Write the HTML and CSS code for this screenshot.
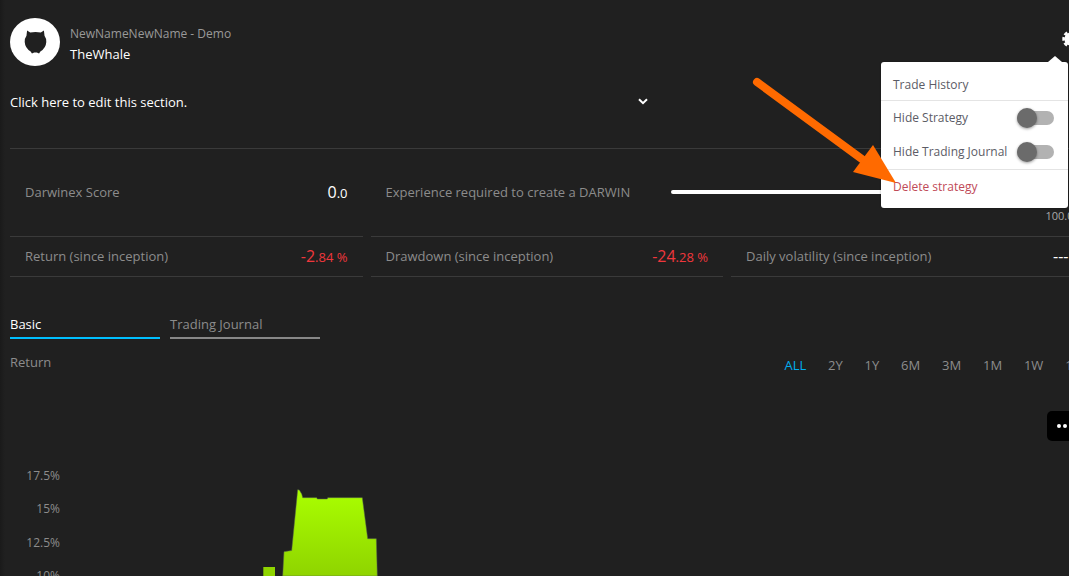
FILE: index.html

```html
<!DOCTYPE html>
<html lang="en">
<head>
    <meta charset="UTF-8">
    <title>TheWhale - Strategy</title>
    <link rel="stylesheet" href="styles.css">
</head>
<body>
    <div class="page">
        <header class="header">
            <div class="avatar">
                <svg width="23" height="26" viewBox="0 0 26 28">
                    <path fill="#202020" d="M3.5 1 L7 3.4 Q13 2.2 19 3.4 L22.5 1 L23.2 7 Q25.4 10 25.2 14 Q24.8 21 18.5 24.6 L17 27 L14.5 26 L11.5 26 L9 27 L7.5 24.6 Q1.2 21 0.8 14 Q0.6 10 2.8 7 Z"/>
                </svg>
            </div>
            <div class="owner">
                <div class="owner-account">NewNameNewName - Demo</div>
                <div class="owner-name">TheWhale</div>
            </div>
            <svg class="gear" width="18" height="18" viewBox="0 0 18 18">
                <circle cx="9" cy="9" r="6.6" fill="#fff"/>
                <circle cx="9" cy="9" r="7.4" fill="none" stroke="#fff" stroke-width="2.6" stroke-dasharray="3.6 2.2" stroke-dashoffset="1.8"/>
            </svg>
        </header>

        <div class="about">
            <span class="about-text">Click here to edit this section.</span>
            <svg class="chevron" width="10" height="7" viewBox="0 0 10 7">
                <polyline points="1,1.2 5,5.2 9,1.2" fill="none" stroke="#fff" stroke-width="2"/>
            </svg>
        </div>

        <div class="stats">
            <div class="stat stat-tall">
                <span class="stat-label">Darwinex Score</span>
                <span class="stat-value"><b>0</b><small>.0</small></span>
            </div>
            <div class="stat stat-tall stat-wide">
                <span class="stat-label">Experience required to create a DARWIN</span>
                <div class="progress">
                    <div class="progress-bar"></div>
                    <div class="progress-max">100.0</div>
                </div>
            </div>
            <div class="stat">
                <span class="stat-label">Return (since inception)</span>
                <span class="stat-value negative"><b>-2</b><small>.84 %</small></span>
            </div>
            <div class="stat">
                <span class="stat-label">Drawdown (since inception)</span>
                <span class="stat-value negative"><b>-24</b><small>.28 %</small></span>
            </div>
            <div class="stat">
                <span class="stat-label">Daily volatility (since inception)</span>
                <span class="stat-value"><b>---</b></span>
            </div>
        </div>

        <div class="tabs">
            <div class="tab active">Basic</div>
            <div class="tab">Trading Journal</div>
        </div>

        <div class="chart-head">
            <span class="chart-title">Return</span>
            <div class="ranges">
                <span class="range active">ALL</span>
                <span class="range">2Y</span>
                <span class="range">1Y</span>
                <span class="range">6M</span>
                <span class="range">3M</span>
                <span class="range">1M</span>
                <span class="range">1W</span>
                <span class="range">1D</span>
            </div>
        </div>

        <div class="chart">
            <div class="more"><i></i><i></i><i></i></div>
            <div class="axis">
                <span>17.5%</span>
                <span>15%</span>
                <span>12.5%</span>
                <span>10%</span>
            </div>
            <svg class="plot" width="400" height="110" viewBox="0 466 400 110">
                <defs>
                    <linearGradient id="area" x1="0" y1="0" x2="0" y2="1">
                        <stop offset="0" stop-color="#aaff00"/>
                        <stop offset="1" stop-color="#8fd400"/>
                    </linearGradient>
                </defs>
                <polygon fill="#8fd400" points="263.3,576 263.3,567 275,567 275,576"/>
                <polygon fill="url(#area)" stroke="#5a6a4a" stroke-width="0.5" points="282.7,576 284,551.7 291.7,550.5 297.7,489.7 299.3,490 301.7,494 302.7,497.7 316.7,497.7 317.3,499 327.3,499 327.7,497.7 362.3,497.7 367.7,538.7 376.3,538.7 377.3,576"/>
            </svg>
        </div>

        <div class="menu">
            <div class="menu-item menu-first">Trade History</div>
            <div class="menu-group">
                <div class="menu-item menu-toggle">
                    Hide Strategy
                    <span class="toggle"></span>
                </div>
                <div class="menu-item menu-toggle">
                    Hide Trading Journal
                    <span class="toggle"></span>
                </div>
            </div>
            <div class="menu-item menu-danger">Delete strategy</div>
        </div>

        <svg class="arrow" width="160" height="120" viewBox="0 0 160 120">
            <line x1="7" y1="7" x2="120" y2="90" stroke="#ff6a00" stroke-width="8" stroke-linecap="round"/>
            <polygon fill="#ff6a00" points="146,108 123,70 103,97"/>
        </svg>
    </div>
</body>
</html>
```

FILE: styles.css

```css
* {
    box-sizing: border-box;
}
html, body {
    height: 100%;
}
body {
    margin: 0;
    overflow: hidden;
    font-family: "Open Sans", Arial, sans-serif;
    font-size: 13px;
    color: #8c8c8c;
    background: linear-gradient(90deg, #1a1a1a, #202020 5px);
}
.page {
    position: relative;
    width: 1082px;
    height: 576px;
    padding-left: 10px;
    overflow: hidden;
}

/* header */
.header {
    display: flex;
    align-items: flex-start;
    height: 84px;
    padding-top: 18px;
}
.avatar {
    display: flex;
    align-items: center;
    justify-content: center;
    width: 50px;
    height: 48px;
    border-radius: 50%;
    background: #fff;
}
.owner {
    margin-left: 10px;
    padding-top: 7px;
}
.owner-account {
    font-size: 12px;
    line-height: 18px;
    color: #999;
}
.owner-name {
    margin-top: 2px;
    line-height: 18px;
    color: #fff;
}
.gear {
    margin-left: auto;
    margin-top: 12px;
    margin-right: 2px;
}

.about {
    display: flex;
    align-items: center;
    height: 36px;
}
.about-text {
    color: #fff;
}
.chevron {
    margin-left: 451px;
    margin-top: -2px;
}

/* stats */
.stats {
    display: grid;
    grid-template-columns: 352.5px 352.5px 352.5px;
    column-gap: 8px;
    margin-top: 28px;
    margin-right: -2px;
    border-top: 1px solid #3a3a3a;
}
.stat {
    display: flex;
    justify-content: space-between;
    height: 40px;
    padding: 10px 15px 0;
    line-height: 18px;
    border-bottom: 1px solid #3a3a3a;
}
.stat-tall {
    height: 88px;
    padding-top: 34px;
}
.stat-wide {
    grid-column: span 2;
    justify-content: flex-start;
}
.stat-value {
    color: #fff;
    white-space: nowrap;
}
.stat-value b {
    font-size: 16px;
    font-weight: 400;
}
.stat-value small {
    font-size: 13px;
}
.stat-value.negative {
    color: #f0373c;
}
.progress {
    position: relative;
    margin-left: 41px;
    flex: 1;
}
.progress-bar {
    height: 4px;
    margin-top: 7px;
    margin-right: 20px;
    border-radius: 2px;
    background: #fff;
}
.progress-max {
    position: absolute;
    top: 24px;
    right: -15px;
    width: 38px;
    font-size: 11px;
    color: #aaa;
    white-space: nowrap;
}

/* tabs */
.tabs {
    display: flex;
    gap: 10px;
    margin-top: 37px;
}
.tab {
    width: 150px;
    height: 25px;
    line-height: 20px;
    border-bottom: 2px solid #888;
}
.tab.active {
    color: #fff;
    border-bottom-color: #00bfff;
}

/* chart */
.chart-head {
    display: flex;
    justify-content: space-between;
    height: 62px;
    margin-top: 14px;
}
.chart-title {
    line-height: 18px;
}
.ranges {
    display: flex;
    gap: 21.8px;
    margin-top: 3px;
    line-height: 18px;
}
.range.active {
    color: #00aeef;
}
.chart {
    position: relative;
    display: flex;
    height: 164px;
    margin-left: -10px;
}
.more {
    position: absolute;
    top: -4px;
    right: 0;
    display: flex;
    align-items: center;
    gap: 2px;
    width: 35px;
    height: 30px;
    padding-left: 10px;
    border-radius: 5px 0 0 5px;
    background: #000;
}
.more i {
    width: 4px;
    height: 4px;
    border-radius: 50%;
    background: #fff;
}
.axis {
    display: flex;
    flex-direction: column;
    align-items: flex-end;
    gap: 15.4px;
    width: 60px;
    padding-top: 52px;
    font-size: 12px;
    line-height: 18px;
}
.plot {
    position: absolute;
    left: 0;
    top: 51px;
}

/* settings menu */
.menu {
    position: absolute;
    top: 62px;
    left: 881px;
    width: 187px;
    height: 146px;
    border-radius: 3px;
    font-size: 12px;
    color: #5c5c66;
    background: #fff;
    box-shadow: 0 0 2px rgba(0, 0, 0, 0.4);
}
.menu::before {
    content: "";
    position: absolute;
    top: -6px;
    right: 6px;
    border-left: 7px solid transparent;
    border-right: 7px solid transparent;
    border-bottom: 6px solid #fff;
}
.menu-item {
    display: flex;
    align-items: center;
    justify-content: space-between;
    padding: 0 14px 0 12px;
}
.menu-first {
    height: 38px;
    padding-top: 7px;
}
.menu-group {
    height: 70px;
    border-top: 1px solid #e4e4e4;
    border-bottom: 1px solid #e4e4e4;
}
.menu-toggle {
    height: 34px;
}
.menu-toggle:first-child {
    margin-top: -1px;
}
.menu-danger {
    height: 33px;
    color: #bf4a58;
}
.toggle {
    position: relative;
    width: 37px;
    height: 14px;
    margin-top: 2px;
    border-radius: 7px;
    background: #b2b2b2;
}
.toggle::after {
    content: "";
    position: absolute;
    top: -3px;
    left: 0;
    width: 20px;
    height: 20px;
    border-radius: 50%;
    background: #6b6b6b;
    box-shadow: 0 1px 3px rgba(0, 0, 0, 0.4);
}

/* annotation drawn on top of the screenshot */
.arrow {
    position: absolute;
    left: 750px;
    top: 75px;
}
```
